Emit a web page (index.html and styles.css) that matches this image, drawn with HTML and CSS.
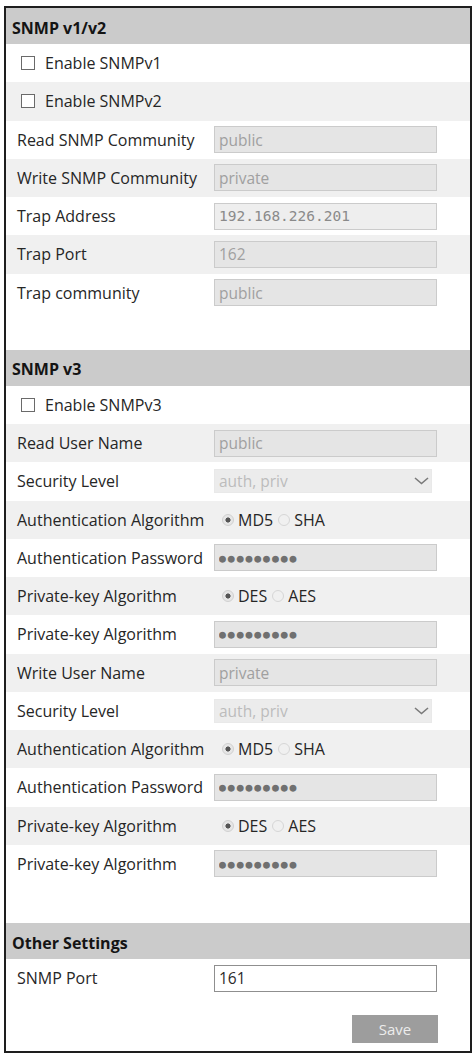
FILE: index.html
```html
<!DOCTYPE html>
<html lang="en">
<head>
<meta charset="utf-8">
<title>SNMP</title>
<link rel="stylesheet" href="styles.css">
</head>
<body>
<div class="panel">
  <section class="section">
    <h2 class="section-head">SNMP v1/v2</h2>
    <div class="rows rows-gap">
      <label class="row"><input type="checkbox" class="check"><span>Enable SNMPv1</span></label>
      <label class="row"><input type="checkbox" class="check"><span>Enable SNMPv2</span></label>
      <div class="row"><span class="label">Read SNMP Community</span><input class="field" value="public" disabled></div>
      <div class="row"><span class="label">Write SNMP Community</span><input class="field" value="private" disabled></div>
      <div class="row"><span class="label">Trap Address</span><input class="field field-mono field-light" value="192.168.226.201" disabled></div>
      <div class="row"><span class="label">Trap Port</span><input class="field" value="162" disabled></div>
      <div class="row"><span class="label">Trap community</span><input class="field" value="public" disabled></div>
    </div>
  </section>

  <section class="section">
    <h2 class="section-head">SNMP v3</h2>
    <div class="rows rows-gap-lg">
      <label class="row"><input type="checkbox" class="check"><span>Enable SNMPv3</span></label>
      <div class="row"><span class="label">Read User Name</span><input class="field" value="public" disabled></div>
      <div class="row"><span class="label">Security Level</span>
        <span class="select-wrap"><select class="select" disabled><option>auth, priv</option></select><svg class="chev" width="15" height="8" viewBox="0 0 15 8"><polyline points="1,1 7.5,6.5 14,1" fill="none" stroke="#7a7a7a" stroke-width="1.6"/></svg></span>
      </div>
      <div class="row"><span class="label">Authentication Algorithm</span>
        <span class="radios"><input type="radio" class="radio" name="a1" checked disabled><span class="opt">MD5</span><input type="radio" class="radio" name="a1" disabled><span class="opt">SHA</span></span>
      </div>
      <div class="row"><span class="label">Authentication Password</span><input class="field field-dots" value="●●●●●●●●●" disabled></div>
      <div class="row"><span class="label">Private-key Algorithm</span>
        <span class="radios"><input type="radio" class="radio" name="p1" checked disabled><span class="opt">DES</span><input type="radio" class="radio" name="p1" disabled><span class="opt">AES</span></span>
      </div>
      <div class="row"><span class="label">Private-key Algorithm</span><input class="field field-dots" value="●●●●●●●●●" disabled></div>
      <div class="row"><span class="label">Write User Name</span><input class="field" value="private" disabled></div>
      <div class="row"><span class="label">Security Level</span>
        <span class="select-wrap"><select class="select" disabled><option>auth, priv</option></select><svg class="chev" width="15" height="8" viewBox="0 0 15 8"><polyline points="1,1 7.5,6.5 14,1" fill="none" stroke="#7a7a7a" stroke-width="1.6"/></svg></span>
      </div>
      <div class="row"><span class="label">Authentication Algorithm</span>
        <span class="radios"><input type="radio" class="radio" name="a2" checked disabled><span class="opt">MD5</span><input type="radio" class="radio" name="a2" disabled><span class="opt">SHA</span></span>
      </div>
      <div class="row"><span class="label">Authentication Password</span><input class="field field-dots" value="●●●●●●●●●" disabled></div>
      <div class="row"><span class="label">Private-key Algorithm</span>
        <span class="radios"><input type="radio" class="radio" name="p2" checked disabled><span class="opt">DES</span><input type="radio" class="radio" name="p2" disabled><span class="opt">AES</span></span>
      </div>
      <div class="row"><span class="label">Private-key Algorithm</span><input class="field field-dots" value="●●●●●●●●●" disabled></div>
    </div>
  </section>

  <section class="section">
    <h2 class="section-head">Other Settings</h2>
    <div class="rows">
      <div class="row"><span class="label">SNMP Port</span><input class="field field-active" value="161"></div>
    </div>
    <div class="actions"><button class="btn" type="button">Save</button></div>
  </section>
</div>
</body>
</html>
```

FILE: styles.css
```css
* { box-sizing: border-box; }

body {
  margin: 0;
  padding: 6px 4px 0;
  background: #fff;
  font-family: "Open Sans", "Noto Sans", sans-serif;
  font-size: 16px;
  color: #262626;
}

.panel {
  border: 2px solid #1e1e1e;
}

.section-head {
  margin: 0;
  height: 36px;
  display: flex;
  align-items: center;
  padding: 3px 0 0 6px;
  background: #cbcbcb;
  font-size: 16px;
  font-weight: 700;
  color: #141414;
}

.rows-gap { padding-bottom: 38px; }
.rows-gap-lg { padding-bottom: 40px; }

.row {
  height: 38.25px;
  display: flex;
  align-items: center;
  padding-left: 11px;
}

.row:nth-child(even) { background: #f0f0f0; }

.label {
  width: 197px;
  flex: none;
  color: #262626;
}

.check {
  appearance: none;
  margin: 0 10px 0 4px;
  width: 14px;
  height: 14px;
  border: 1px solid #6a6a6a;
  background: #fff;
  flex: none;
}

.field {
  width: 223px;
  height: 27px;
  border: 1px solid #cbcbcb;
  background: #e5e5e5;
  padding: 0 4px;
  font: inherit;
  font-size: 15.5px;
  color: #a0a0a0;
}

.field-light { background: #eeeeee; }

.field-mono {
  font-family: "DejaVu Sans Mono", monospace;
  font-size: 14.5px;
  color: #8a8a8a;
}

.field-dots {
  font-family: "DejaVu Sans Mono", monospace;
  font-size: 11.5px;
  letter-spacing: 1.9px;
  color: #707070;
}

.field-active {
  background: #fff;
  border-color: #8f8f8f;
  color: #2a2a2a;
}

.select-wrap {
  position: relative;
  display: flex;
}

.select {
  appearance: none;
  width: 218px;
  height: 24px;
  border: 1px solid #e0e0e0;
  background: #e5e5e5;
  padding: 0 4px;
  font: inherit;
  font-size: 15.5px;
  color: #a0a0a0;
}

.chev {
  position: absolute;
  right: 3px;
  top: 8px;
}

.radios {
  display: flex;
  align-items: center;
  padding-left: 8px;
}

.radio {
  appearance: none;
  margin: 0 4px 0 0;
  width: 12px;
  height: 12px;
  border-radius: 50%;
  border: 1px solid #d6d6d6;
  background: #f0f0f0;
}

.radio:checked {
  background: radial-gradient(circle, #555 0 2.3px, #e6e6e6 2.8px);
  border-color: #d0d0d0;
}

.opt {
  margin-right: 5px;
  color: #262626;
}

.actions {
  display: flex;
  justify-content: flex-end;
  padding: 18px 32px 8px 0;
}

.btn {
  width: 86px;
  height: 28px;
  border: none;
  background: #9d9d9d;
  color: #ececec;
  font: inherit;
  font-size: 15px;
}
```
